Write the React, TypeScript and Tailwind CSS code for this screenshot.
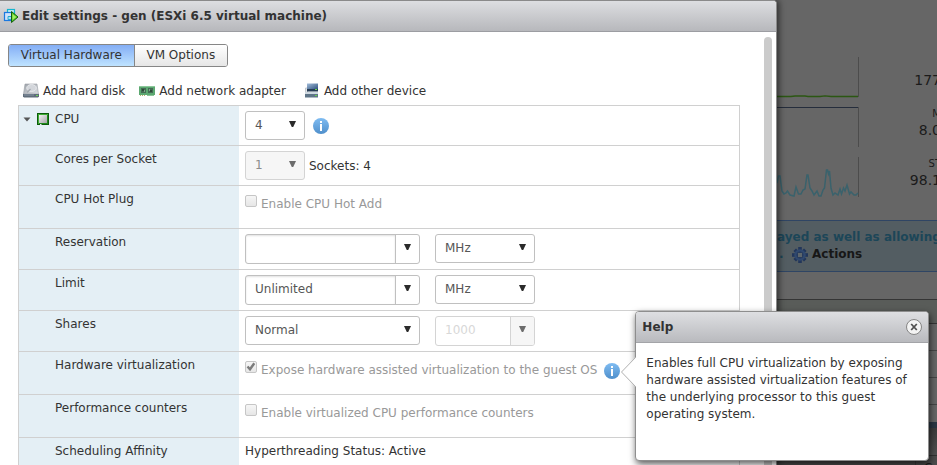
import { useState, type ReactNode } from 'react';

function VmIcon() {
  return (
    <svg width="16" height="16" viewBox="0 0 16 16" className="shrink-0" aria-hidden="true">
      <rect x="4.500" y="1.500" width="7" height="7" fill="#c2ecf4" stroke="#14b4cf" strokeWidth="1.200" />
      <rect x="1.500" y="4.500" width="8" height="8" fill="#cfe2fb" stroke="#1a78e0" strokeWidth="1.200" />
      <path d="M5 8.500h6v3H5z" fill="#a8e2ee" stroke="#25a6d2" />
      <path d="M8.500 3.500v11l6.500-5.500z" fill="#58cc1c" stroke="#125f0e" strokeLinejoin="round" />
      <path d="M9.500 6v6l3.800-3z" fill="#a2ee66" />
    </svg>
  );
}

function DiskIcon() {
  return (
    <svg width="16" height="16" viewBox="0 0 16 16" className="shrink-0" aria-hidden="true">
      <defs>
        <linearGradient id="disk-top" x1="0" y1="0" x2="1" y2="1">
          <stop offset="0" stopColor="#9ca1a8" />
          <stop offset="1" stopColor="#dcdfe3" />
        </linearGradient>
      </defs>
      <path d="M2 1h12l1.500 10h-15z" fill="url(#disk-top)" stroke="#9a9fa6" strokeWidth="0.600" />
      <ellipse cx="8.500" cy="5" rx="4.800" ry="3.500" fill="#d3d6db" stroke="#eeeff1" strokeWidth="0.800" />
      <path d="M4 9.500l3.500-3.500" stroke="#a2a7ae" strokeWidth="1.200" />
      <path d="M0 11h16v2.500l-1 1H1l-1-1z" fill="#5f6c7a" />
      <rect x="1" y="11.500" width="10" height="1" fill="#8794a3" />
      <rect x="13" y="12" width="2" height="1" fill="#6fd453" />
    </svg>
  );
}

function NetworkIcon() {
  return (
    <svg width="16" height="16" viewBox="0 0 16 16" className="shrink-0" aria-hidden="true">
      <rect x="0" y="3" width="16" height="9" fill="#5ca871" />
      <rect x="0" y="3" width="16" height="1" fill="#8cc79a" />
      <rect x="2" y="5" width="5" height="5" fill="#456b54" />
      <rect x="9" y="5" width="5" height="5" fill="#456b54" />
      <path d="M3 6h2v2H3zM11 7h2v2h-2z" fill="#2d4938" />
      <path d="M5 7h1v2H5zM10 6h1v2h-1z" fill="#7fa58b" />
      <path d="M1 12.500h6" stroke="#b7b06a" strokeDasharray="1 1" />
      <path d="M8 12.500h7" stroke="#8bc598" />
    </svg>
  );
}

function DeviceIcon() {
  return (
    <svg width="16" height="16" viewBox="0 0 16 16" className="shrink-0" aria-hidden="true">
      <defs>
        <linearGradient id="dev-top" x1="0" y1="0" x2="1" y2="1">
          <stop offset="0" stopColor="#a3bddb" />
          <stop offset="1" stopColor="#31547f" />
        </linearGradient>
      </defs>
      <path d="M1.500 5h2v5h-2z" fill="#e2e6ea" stroke="#a4adb6" strokeWidth="0.600" />
      <path d="M1 10h13v4.500H1z" fill="#5f7588" />
      <rect x="1" y="9" width="13" height="2" fill="#cfd9e1" />
      <rect x="3" y="0.500" width="11" height="5.500" fill="url(#dev-top)" />
      <rect x="3" y="6" width="11" height="2.500" fill="#263c54" />
      <rect x="11" y="6" width="2" height="1" fill="#68d548" />
      <rect x="11" y="12" width="2" height="1" fill="#68d548" />
    </svg>
  );
}

function CpuIcon() {
  return (
    <svg width="12" height="12" viewBox="0 0 12 12" className="shrink-0" aria-hidden="true">
      <defs>
        <linearGradient id="cpu-core" x1="0" y1="0" x2="1" y2="1">
          <stop offset="0" stopColor="#f2f2f2" />
          <stop offset="1" stopColor="#a4a4a8" />
        </linearGradient>
      </defs>
      <path d="M0 0h12v12H5l-1-1H3v1H0z" fill="#0b5a0b" />
      <path d="M1 1h10v1H2v9H1z" fill="#3fae34" />
      <path d="M10 2h1v9H2v-1h8z" fill="#1f8a1c" />
      <rect x="2" y="2" width="8" height="8" fill="url(#cpu-core)" />
    </svg>
  );
}

function GearIcon() {
  return (
    <svg width="16" height="16" viewBox="-8 -8 16 16" className="shrink-0" aria-hidden="true">
      <g fill="#22365a">
        <rect x="-1.800" y="-8" width="3.600" height="16" />
        <rect x="-8" y="-1.800" width="16" height="3.600" />
        <rect x="-1.800" y="-7.500" width="3.600" height="15" transform="rotate(45)" />
        <rect x="-1.800" y="-7.500" width="3.600" height="15" transform="rotate(-45)" />
      </g>
      <circle r="4.600" fill="none" stroke="#30496f" strokeWidth="2.400" />
      <rect x="-2.500" y="-2.500" width="5" height="5" rx="1" fill="#5d666b" stroke="#22365a" strokeWidth="0.800" />
    </svg>
  );
}

function InfoIcon() {
  return (
    <svg width="16" height="16" viewBox="0 0 16 16" className="block" aria-hidden="true">
      <defs>
        <linearGradient id="info-fill" x1="0" y1="0" x2="0" y2="1">
          <stop offset="0" stopColor="#7fbcf2" />
          <stop offset="1" stopColor="#4f8fcb" />
        </linearGradient>
      </defs>
      <circle cx="8" cy="8" r="8" fill="url(#info-fill)" />
      <rect x="7" y="3" width="2" height="2" fill="#fff" />
      <rect x="7" y="6" width="2" height="7" fill="#fff" />
    </svg>
  );
}

function Arrow() {
  return (
    <svg width="7" height="6" viewBox="0 0 7 6" className="block" aria-hidden="true">
      <path d="M0 0h7L4.200 6H2.800z" fill="currentColor" />
    </svg>
  );
}

type SelectProps = { label: string; options: string[]; width: string; disabled?: boolean };

function Select({ label, options, width, disabled }: SelectProps) {
  return (
    <div className={`relative h-[29px] ${width} ${disabled ? 'text-[#6c6c6c]' : 'text-[#2b2b2b]'}`}>
      <select
        aria-label={label}
        disabled={disabled}
        className="h-full w-full appearance-none rounded-[3px] border border-[#c0c0c0] bg-white pb-0.5 pl-[9px] text-[#565656] disabled:border-[#d4d4d4] disabled:bg-[#f6f6f6] disabled:text-[#8c8c8c] disabled:opacity-100"
      >
        {options.map((o) => (
          <option key={o}>{o}</option>
        ))}
      </select>
      <span className="pointer-events-none absolute top-2.5 right-[9px]">
        <Arrow />
      </span>
    </div>
  );
}

function Combo({ label, value, width, disabled }: { label: string; value: string; width: string; disabled?: boolean }) {
  const border = disabled ? 'border-[#d4d4d4]' : 'border-[#c0c0c0]';
  return (
    <div className={`flex h-[30px] overflow-hidden rounded-[3px] border bg-white ${border} ${width}`}>
      <input
        aria-label={label}
        defaultValue={value}
        disabled={disabled}
        className="min-w-0 flex-1 pb-[3px] pl-[9px] text-[#565656] shadow-[inset_0_1px_2px_rgba(0,0,0,0.12)] disabled:text-[#d8d8d8] disabled:shadow-none"
      />
      <button
        type="button"
        aria-label={`${label} choices`}
        disabled={disabled}
        className={`flex w-6 justify-center border-l pt-[9px] text-[#2b2b2b] disabled:bg-[#f6f6f6] disabled:text-[#6c6c6c] ${border}`}
      >
        <Arrow />
      </button>
    </div>
  );
}

function Check({ label, checked }: { label: string; checked?: boolean }) {
  return (
    <label className="flex items-start gap-1 text-[#999]">
      <span className="relative block size-3">
        <input
          type="checkbox"
          disabled
          defaultChecked={checked}
          className="block size-3 appearance-none rounded-[2px] border border-[#c6c6c6] bg-linear-to-b from-[#f6f6f6] to-[#e6e6e6]"
        />
        {checked && (
          <svg width="12" height="12" viewBox="0 0 12 12" className="pointer-events-none absolute inset-0" aria-hidden="true">
            <path d="M2.500 5.500l2.500 2.800 4.300-6" fill="none" stroke="#7c7c7c" strokeWidth="2.400" />
          </svg>
        )}
      </span>
      <span className="pt-px leading-4">{label}</span>
    </label>
  );
}

function Row({ name, height, lead, children }: { name: string; height: string; lead?: ReactNode; children: ReactNode }) {
  return (
    <tr className={`align-top ${height}`}>
      <th scope="row" className="w-[220px] bg-[#e4eff5] p-0 pt-[5px] text-left font-normal">
        <div className="flex items-center leading-4">
          <div className="flex w-9 items-center gap-1.5 pl-1">{lead}</div>
          {name}
        </div>
      </th>
      <td className="p-0 pt-[5px] pl-1.5">{children}</td>
    </tr>
  );
}

function HelpPopup({ onClose }: { onClose: () => void }) {
  return (
    <section
      role="dialog"
      aria-label="Help"
      className="absolute -top-[50px] left-[31px] z-20 h-[150px] w-[294px] rounded-[4px] border border-[#8e8e8e] bg-white text-[#333] shadow-[1px_3px_7px_rgba(0,0,0,0.65)]"
    >
      <svg width="16" height="30" viewBox="0 0 16 30" className="absolute top-[45px] -left-[15px]" aria-hidden="true">
        <path d="M15 0L0 15l15 15h1V0z" fill="#fff" />
        <path d="M15 0L0.500 15 15 30" fill="none" stroke="#b0b0b0" />
      </svg>
      <header className="flex h-[31px] items-center justify-between rounded-t-[3px] border-b border-[#a3a4a8] bg-linear-to-b from-[#dedfe2] to-[#b9babe] px-1.5">
        <h2 className="font-bold">Help</h2>
        <button
          type="button"
          aria-label="Close help"
          onClick={onClose}
          className="flex size-4 items-center justify-center rounded-full border border-[#858585] bg-[#f3f3f3]"
        >
          <svg width="8" height="8" viewBox="0 0 8 8" aria-hidden="true">
            <path d="M1.200 1l5.600 6M6.800 1L1.200 7" stroke="#505050" strokeWidth="1.800" />
          </svg>
        </button>
      </header>
      <p className="px-2.5 pt-3 leading-[17px]">
        Enables full CPU virtualization by exposing hardware assisted virtualization features of the underlying
        processor to this guest operating system.
      </p>
    </section>
  );
}

function Monitor() {
  return (
    <aside className="flex w-40 shrink-0 flex-col overflow-hidden bg-[#666] whitespace-nowrap text-[#1b1b1b]">
      <div className="flex h-[220px] shrink-0 justify-between pt-[57px]">
        <svg width="82" height="142" viewBox="0 0 82 142" className="shrink-0" aria-hidden="true">
          <path d="M81.500 0v40M81.500 50v40M81.500 100v40" stroke="#4c4c4c" />
          <path d="M0 39.500h14l4-.5h10l3 .5h12l5-.7 6 .7h27" fill="none" stroke="#2b5712" strokeWidth="1.300" />
          <path d="M0 50.500h81" stroke="#252d3c" />
          <path
            d="M0 126L1.500 119H3L5 134L7 137L9 136L10.500 134L13 138L17 139L19 130L21.500 137L24 137L26 133L28 132L30 118L31 118L33 131L35 134L37 138L40 134L42 139L44 139L46 133L47.500 131L49.500 113L50.500 113L51.500 117L52.500 114L54 131L56 138L58 136L61 138L63 132L64.500 137L66.500 131L68 134L70 128L72.500 137L74 135L77 138L79 138L81 136"
            fill="none"
            stroke="#3a626c"
            strokeWidth="1.500"
          />
        </svg>
        <div className="-mr-1 flex flex-col items-end pt-[15px] text-sm leading-[17px]">
          <div>177</div>
          <div className="mt-4 text-[10px]">M</div>
          <div>8.0</div>
          <div className="mt-4 text-[10px]">ST</div>
          <div>98.1</div>
        </div>
      </div>
      <div className="h-[52px] shrink-0 border-y border-[#2f4564] bg-[#535d62] pt-2 leading-[17px] font-bold text-[#1c4658]">
        <div>ayed as well as allowing</div>
        <div className="flex items-center">
          <span className="w-[15px] pl-0.5">.</span>
          <button type="button" className="flex items-center gap-1 font-bold text-[#171717]">
            <GearIcon />
            Actions
          </button>
        </div>
      </div>
      <div className="mt-[27px] h-[25px] shrink-0 border-y border-[#353535] bg-[#595c59]" />
      <div className="h-[27px] shrink-0 border-b border-[#464646]" />
      <div className="h-[27px] shrink-0 border-b border-[#464646]" />
      <div className="h-[27px] shrink-0 border-b border-[#464646]" />
      <div className="h-[17px] shrink-0" />
      <div className="h-[6px] shrink-0 bg-[#2b3744]" />
      <div className="h-[28px] shrink-0 border-b border-[#333] bg-linear-to-b from-[#3c3c3c] to-[#515151]" />
      <div className="flex min-h-0 flex-1 bg-[#4c4c4c]">
        <div className="w-[139px] border-r border-[#3c3c3c]" />
        <div className="pt-1 pl-2 leading-4">C</div>
      </div>
    </aside>
  );
}

const tabs = ['Virtual Hardware', 'VM Options'];

export default function App() {
  const [tab, setTab] = useState(tabs[0]);
  const [help, setHelp] = useState(true);

  return (
    <div className="flex h-screen overflow-hidden bg-[#666] font-['DejaVu_Sans','Noto_Sans',sans-serif] text-xs text-[#333]">
      <main className="relative z-10 flex min-w-0 flex-1 flex-col rounded-tr-[4px] border-t border-r border-[#8a8a8a] bg-white shadow-[2px_0_6px_rgba(0,0,0,0.55)]">
        <header className="flex h-[31px] shrink-0 items-center gap-[3px] rounded-tr-[3px] border-b border-[#9c9da2] bg-linear-to-b from-[#dddee1] to-[#b7b8bc] pl-[3px]">
          <VmIcon />
          <h1 className="font-bold">Edit settings - gen (ESXi 6.5 virtual machine)</h1>
        </header>

        <div className="flex min-h-0 flex-1 pr-1">
          <div className="min-w-0 flex-1 pr-6">
            <div role="tablist" className="mt-3 ml-2 flex w-[220px] overflow-hidden rounded-[3px] border border-[#868686]">
              {tabs.map((t) => (
                <button
                  key={t}
                  type="button"
                  role="tab"
                  aria-selected={t === tab}
                  onClick={() => setTab(t)}
                  className="h-[21px] flex-auto bg-linear-to-b from-white to-[#e6e6e6] pb-px first:border-r first:border-[#868686] aria-selected:from-[#84aef5] aria-selected:to-[#bfe3ff]"
                >
                  {t}
                </button>
              ))}
            </div>

            <div className="mt-3.5 ml-[23px] flex h-5 items-center gap-3.5">
              <button type="button" className="flex items-center gap-1">
                <DiskIcon />
                Add hard disk
              </button>
              <button type="button" className="flex items-center gap-1">
                <NetworkIcon />
                Add network adapter
              </button>
              <button type="button" className="ml-1 flex items-center gap-1">
                <DeviceIcon />
                Add other device
              </button>
            </div>

            <div className="mt-1 pl-[18px]">
              <table className="w-full table-fixed border-separate border-spacing-0 border-x border-[#d0d0d0] [&_td]:border-t [&_td]:border-[#d0d0d0] [&_th]:border-t [&_th]:border-[#d0d0d0]">
                <tbody>
                  <Row
                    name="CPU"
                    height="h-10"
                    lead={
                      <>
                        <svg width="8" height="5" viewBox="0 0 8 5" className="shrink-0" aria-hidden="true">
                          <path d="M0.500 0.500h7L4 4.500z" fill="#555" />
                        </svg>
                        <CpuIcon />
                      </>
                    }
                  >
                    <div className="flex items-center gap-2">
                      <Select label="CPU" options={['4', '2', '1']} width="w-[60px]" />
                      <button type="button" aria-label="About CPU">
                        <InfoIcon />
                      </button>
                    </div>
                  </Row>
                  <Row name="Cores per Socket" height="h-10">
                    <div className="flex items-center gap-1">
                      <Select label="Cores per Socket" options={['1']} width="w-[60px]" disabled />
                      Sockets: 4
                    </div>
                  </Row>
                  <Row name="CPU Hot Plug" height="h-[43px]">
                    <div className="pt-1">
                      <Check label="Enable CPU Hot Add" />
                    </div>
                  </Row>
                  <Row name="Reservation" height="h-[41px]">
                    <div className="flex items-start gap-[15px]">
                      <Combo label="Reservation" value="" width="w-[175px]" />
                      <Select label="Reservation unit" options={['MHz', 'GHz']} width="w-[100px]" />
                    </div>
                  </Row>
                  <Row name="Limit" height="h-[41px]">
                    <div className="flex items-start gap-[15px]">
                      <Combo label="Limit" value="Unlimited" width="w-[175px]" />
                      <Select label="Limit unit" options={['MHz', 'GHz']} width="w-[100px]" />
                    </div>
                  </Row>
                  <Row name="Shares" height="h-[41px]">
                    <div className="flex items-start gap-[15px]">
                      <Select label="Shares" options={['Normal', 'Low', 'High']} width="w-[175px]" />
                      <Combo label="Shares value" value="1000" width="w-[100px]" disabled />
                    </div>
                  </Row>
                  <Row name="Hardware virtualization" height="h-[43px]">
                    <div className="flex items-start gap-[7px] pt-1">
                      <Check label="Expose hardware assisted virtualization to the guest OS" checked />
                      <div className="relative pt-0.5">
                        <button type="button" aria-label="About hardware virtualization" className="block" onClick={() => setHelp(!help)}>
                          <InfoIcon />
                        </button>
                        {help && <HelpPopup onClose={() => setHelp(false)} />}
                      </div>
                    </div>
                  </Row>
                  <Row name="Performance counters" height="h-[43px]">
                    <div className="pt-1">
                      <Check label="Enable virtualized CPU performance counters" />
                    </div>
                  </Row>
                  <Row name="Scheduling Affinity" height="h-[43px]">
                    <span className="leading-4">Hyperthreading Status: Active</span>
                  </Row>
                </tbody>
              </table>
            </div>
          </div>
          <div className="mt-[5px] w-2 rounded-t-full bg-[#cbcbcb]" />
        </div>
      </main>
      <Monitor />
    </div>
  );
}
